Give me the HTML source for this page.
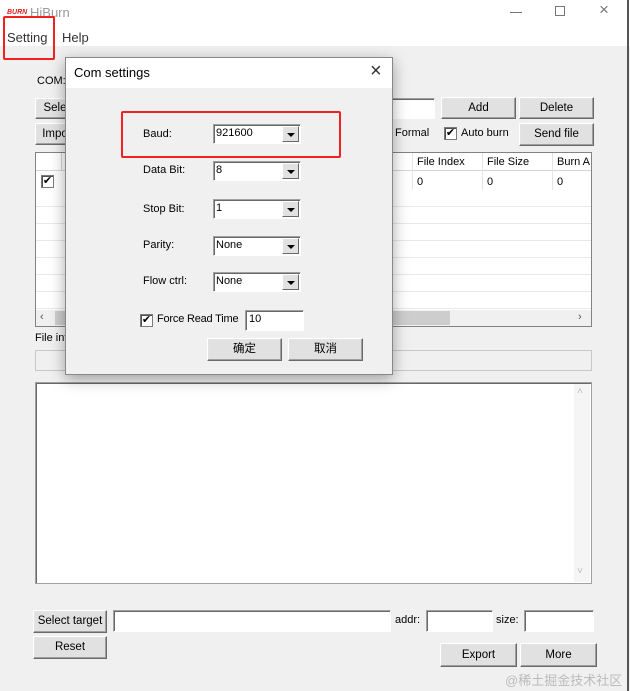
<!DOCTYPE html><html><head><meta charset="utf-8"><style>
*{box-sizing:border-box;margin:0;padding:0}
body{width:630px;height:691px;overflow:hidden;position:relative;background:#f0f0f0;font-family:"Liberation Sans","Noto Sans CJK SC",sans-serif;font-size:11px;color:#000}
.a{position:absolute}
.btn{position:absolute;background:#e1e1e1;border:1px solid #fff;border-right-color:#696969;border-bottom-color:#696969;box-shadow:inset -1px -1px 0 #a0a0a0,inset 1px 1px 0 #e3e3e3;text-align:center;font-size:11.5px}
.inp{position:absolute;background:#fff;border:1px solid #a0a0a0;border-right-color:#fff;border-bottom-color:#fff;box-shadow:inset 1px 1px 0 #696969}
.cb{position:absolute;width:13px;height:13px;background:#fff;border:1px solid #7a7a7a;box-shadow:inset 1px 1px 0 #505050;font-size:11px;line-height:11px;text-align:center}
.combo{position:absolute;width:88px;height:20px;background:#fff;border:1px solid #a0a0a0;border-right-color:#fff;border-bottom-color:#fff;box-shadow:inset 1px 1px 0 #696969;padding:2px 0 0 2px;font-size:11px}
.combo i{position:absolute;right:1px;top:1px;width:17px;height:16px;background:#e1e1e1;border:1px solid #fff;border-right-color:#696969;border-bottom-color:#696969}
.combo i:after{content:"";position:absolute;left:4px;top:6px;border:4px solid transparent;border-top:4px solid #000;border-bottom:0}
.red{position:absolute;border:2px solid #f0211e;border-radius:2px}
.lbl{position:absolute;font-size:11px}
</style></head><body>
<div class="a" style="left:0;top:0;width:630px;height:46px;background:#fff"></div>
<div class="a" style="left:627px;top:0;width:2px;height:691px;background:#555"></div>
<div class="a" style="left:7px;top:9px;color:#e02020;font-size:7px;font-weight:bold;font-style:italic">BURN</div>
<div class="a" style="left:30px;top:5px;color:#999;font-size:13px">HiBurn</div>
<div class="a" style="left:510px;top:12px;width:12px;height:1px;background:#777"></div>
<div class="a" style="left:555px;top:6px;width:10px;height:10px;border:1px solid #777"></div>
<div class="a" style="left:599px;top:0;color:#777;font-size:17px">×</div>
<div class="a" style="left:7px;top:30px;color:#333;font-size:13px">Setting</div>
<div class="a" style="left:62px;top:30px;color:#333;font-size:13px">Help</div>
<div class="red" style="left:3px;top:16px;width:52px;height:44px"></div>

<div class="lbl" style="left:37px;top:75px">COM:</div>
<div class="btn" style="left:35px;top:98px;width:40px;height:21px;line-height:19px">Sele</div>
<div class="inp" style="left:380px;top:98px;width:55px;height:21px"></div>
<div class="btn" style="left:441px;top:97px;width:75px;height:22px;line-height:20px">Add</div>
<div class="btn" style="left:519px;top:97px;width:75px;height:22px;line-height:20px">Delete</div>
<div class="btn" style="left:35px;top:123px;width:40px;height:22px;line-height:20px">Impo</div>
<div class="lbl" style="left:395px;top:127px">Formal</div>
<div class="cb" style="left:444px;top:127px">✔</div>
<div class="lbl" style="left:461px;top:127px">Auto burn</div>
<div class="btn" style="left:519px;top:123px;width:75px;height:23px;line-height:21px">Send file</div>

<div class="a" style="left:35px;top:152px;width:557px;height:175px;background:#fff;border:1px solid #828282"></div>
<div class="a" style="left:36px;top:153px;width:555px;height:18px;background:#fff;border-bottom:1px solid #d5d5d5"></div>
<div class="a" style="left:61px;top:153px;width:1px;height:18px;background:#d5d5d5"></div>
<div class="a" style="left:412px;top:153px;width:1px;height:157px;background:#e5e5e5"></div>
<div class="a" style="left:482px;top:153px;width:1px;height:157px;background:#e5e5e5"></div>
<div class="a" style="left:552px;top:153px;width:1px;height:157px;background:#e5e5e5"></div>
<div class="lbl" style="left:417px;top:156px">File Index</div>
<div class="lbl" style="left:487px;top:156px">File Size</div>
<div class="lbl" style="left:557px;top:156px">Burn A</div>
<div class="cb" style="left:41px;top:175px">✔</div>
<div class="lbl" style="left:417px;top:176px">0</div>
<div class="lbl" style="left:487px;top:176px">0</div>
<div class="lbl" style="left:557px;top:176px">0</div>
<div class="a" style="left:36px;top:190px;width:555px;height:120px;background:repeating-linear-gradient(#fff 0 16px,#e8e8e8 16px 17px)"></div>
<div class="a" style="left:36px;top:310px;width:555px;height:16px;background:#f0f0f0"></div>
<div class="a" style="left:55px;top:311px;width:395px;height:14px;background:#cdcdcd"></div>
<div class="lbl" style="left:40px;top:311px;color:#555">‹</div>
<div class="lbl" style="left:578px;top:311px;color:#555">›</div>
<div class="lbl" style="left:35px;top:332px">File inf</div>
<div class="a" style="left:35px;top:350px;width:557px;height:21px;border:1px solid #c8c8c8;background:#f0f0f0"></div>
<div class="a" style="left:35px;top:382px;width:557px;height:202px;background:#fff;border:1px solid #a0a0a0;box-shadow:inset 1px 1px 0 #696969"></div>
<div class="a" style="left:574px;top:384px;width:16px;height:198px;background:#f5f5f5"></div>
<div class="lbl" style="left:577px;top:386px;color:#bbb;font-size:10px">˄</div>
<div class="lbl" style="left:577px;top:566px;color:#bbb;font-size:10px">˅</div>

<div class="btn" style="left:33px;top:610px;width:74px;height:23px;line-height:21px">Select target</div>
<div class="inp" style="left:113px;top:610px;width:278px;height:22px"></div>
<div class="lbl" style="left:395px;top:614px">addr:</div>
<div class="inp" style="left:426px;top:610px;width:67px;height:22px"></div>
<div class="lbl" style="left:496px;top:614px">size:</div>
<div class="inp" style="left:524px;top:610px;width:70px;height:22px"></div>
<div class="btn" style="left:33px;top:636px;width:74px;height:23px;line-height:21px">Reset</div>
<div class="btn" style="left:440px;top:643px;width:77px;height:24px;line-height:22px">Export</div>
<div class="btn" style="left:520px;top:643px;width:77px;height:24px;line-height:22px">More</div>
<div class="a" style="left:505px;top:670px;color:#bbb;font-size:13px">@稀土掘金技术社区</div>

<div class="a" style="left:65px;top:57px;width:328px;height:318px;background:#f0f0f0;border:1px solid #888;box-shadow:0 4px 14px rgba(0,0,0,.35)"></div>
<div class="a" style="left:66px;top:58px;width:326px;height:30px;background:#fff"></div>
<div class="a" style="left:74px;top:65px;font-size:13px">Com settings</div>
<div class="a" style="left:370px;top:60px;font-size:20px;color:#333">×</div>
<div class="red" style="left:121px;top:111px;width:220px;height:47px"></div>
<div class="lbl" style="left:143px;top:128px">Baud:</div>
<div class="lbl" style="left:143px;top:164px">Data Bit:</div>
<div class="lbl" style="left:143px;top:203px">Stop Bit:</div>
<div class="lbl" style="left:143px;top:239px">Parity:</div>
<div class="lbl" style="left:143px;top:275px">Flow ctrl:</div>
<div class="combo" style="left:213px;top:124px">921600<i></i></div>
<div class="combo" style="left:213px;top:161px">8<i></i></div>
<div class="combo" style="left:213px;top:199px">1<i></i></div>
<div class="combo" style="left:213px;top:236px">None<i></i></div>
<div class="combo" style="left:213px;top:272px">None<i></i></div>
<div class="cb" style="left:140px;top:314px">✔</div>
<div class="lbl" style="left:157px;top:313px;letter-spacing:-0.2px">Force Read Time</div>
<div class="inp" style="left:245px;top:310px;width:59px;height:21px;padding:2px 3px">10</div>
<div class="btn" style="left:207px;top:338px;width:75px;height:23px;line-height:21px">确定</div>
<div class="btn" style="left:288px;top:338px;width:75px;height:23px;line-height:21px">取消</div>
</body></html>
